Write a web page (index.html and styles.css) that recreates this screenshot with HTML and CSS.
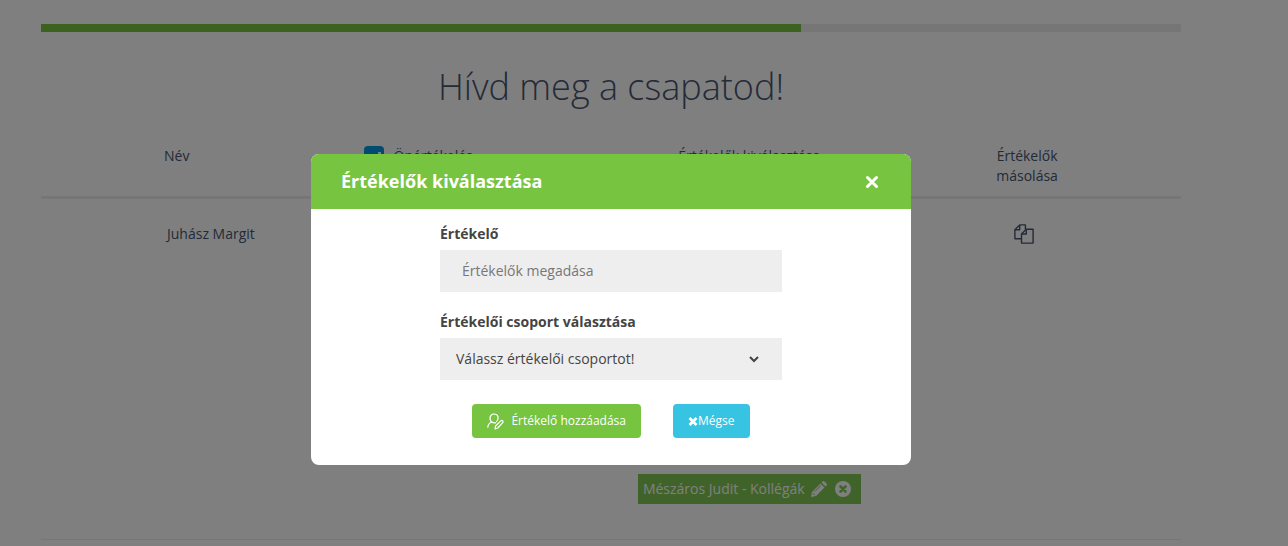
FILE: index.html
```html
<!DOCTYPE html>
<html lang="hu">
<head>
    <meta charset="UTF-8">
    <meta name="viewport" content="width=device-width, initial-scale=1.0">
    <title>Hívd meg a csapatod!</title>
    <link rel="stylesheet" href="styles.css">
</head>
<body>
    <main class="container">
        <div class="progress">
            <div class="progress-bar" style="width: 66.66%"></div>
        </div>

        <h1>Hívd meg a csapatod!</h1>

        <table class="team">
            <thead>
                <tr>
                    <th class="col-name">Név</th>
                    <th class="col-self">
                        <label class="check">
                            <input type="checkbox" checked>
                            Önértékelés
                        </label>
                    </th>
                    <th class="col-raters">Értékelők kiválasztása</th>
                    <th class="col-copy">Értékelők<br>másolása</th>
                </tr>
            </thead>
            <tbody>
                <tr>
                    <td class="col-name member">Juhász Margit</td>
                    <td class="col-self"></td>
                    <td class="col-raters">
                        <div class="tag">
                            <span>Mészáros Judit - Kollégák</span>
                            <button type="button" class="icon-btn" aria-label="Szerkesztés">
                                <svg width="16" height="16" viewBox="0 0 16 16" fill="currentColor">
                                    <path d="M0 16l1-5L9.500 2.500l4 4L5 15zM10.500 1.500L11.500.5q1-1 2 0l2 2q1 1 0 2l-1 1z"/>
                                    <path d="M1.800 12.200l2 2M3.800 10.500l6-6" stroke="#7fc750" stroke-width="1" fill="none"/>
                                </svg>
                            </button>
                            <button type="button" class="icon-btn" aria-label="Törlés">
                                <svg width="16" height="16" viewBox="0 0 16 16">
                                    <circle cx="8" cy="8" r="8" fill="currentColor"/>
                                    <path d="M5.500 5.500l5 5M10.500 5.500l-5 5" stroke="#7fc750" stroke-width="2.600" stroke-linecap="round"/>
                                </svg>
                            </button>
                        </div>
                    </td>
                    <td class="col-copy">
                        <button type="button" class="icon-btn" aria-label="Másolás">
                            <svg width="20" height="20" viewBox="0 0 20 20" fill="none" stroke="currentColor" stroke-width="1.400" stroke-linejoin="round">
                                <path d="M7.500 14.700H.9V5.700L5.700.9h5.700v4.500"/>
                                <path d="M5.700.9v4.800H.9"/>
                                <path d="M12.300 5.300h6.800v13.800H7.500V10z"/>
                                <path d="M12.300 5.300V10H7.500"/>
                            </svg>
                        </button>
                    </td>
                </tr>
            </tbody>
        </table>
    </main>

    <div class="overlay">
        <div class="modal" role="dialog" aria-labelledby="modal-title">
            <div class="modal-header">
                <h2 id="modal-title">Értékelők kiválasztása</h2>
                <button type="button" class="icon-btn" aria-label="Bezárás">
                    <svg width="14" height="14" viewBox="0 0 14 14" fill="none" stroke="currentColor" stroke-width="3" stroke-linecap="round">
                        <path d="M2.500 3.500l9 9M11.500 3.500l-9 9"/>
                    </svg>
                </button>
            </div>
            <form class="modal-body">
                <div class="field">
                    <label for="rater">Értékelő</label>
                    <input type="text" id="rater" placeholder="Értékelők megadása">
                </div>
                <div class="field">
                    <label for="group">Értékelői csoport választása</label>
                    <div class="select">
                        <select id="group">
                            <option>Válassz értékelői csoportot!</option>
                        </select>
                        <svg class="chevron" width="10" height="8" viewBox="0 0 10 8" fill="none" stroke="currentColor" stroke-width="2">
                            <path d="M1 2l4 4 4-4"/>
                        </svg>
                    </div>
                </div>
                <div class="actions">
                    <button type="button" class="btn btn-add">
                        <svg width="17" height="17" viewBox="0 0 17 17" fill="none" stroke="currentColor" stroke-width="1.200" stroke-linecap="round" stroke-linejoin="round">
                            <path d="M4.800 9C1.800 6.500 2.600 1 7 1s5.400 4.800 2.600 7.600"/>
                            <path d="M4.800 9C2.500 9.800 1 11.500.8 14.200M4.800 9c1.200.9 2.600 1.100 3.800.8"/>
                            <path d="M8 16l.6-3 5.200-5.200q1-.8 1.900 0 .8 1 0 1.900L10.700 15z"/>
                        </svg>
                        Értékelő hozzáadása
                    </button>
                    <button type="button" class="btn btn-cancel">
                        <svg width="10" height="9" viewBox="0 0 10 9" fill="none" stroke="currentColor" stroke-width="2.800">
                            <path d="M1.500 1l7 7M8.500 1l-7 7"/>
                        </svg>
                        Mégse
                    </button>
                </div>
            </form>
        </div>
    </div>
</body>
</html>
```

FILE: styles.css
```css
* {
    box-sizing: border-box;
}

body {
    margin: 0;
    padding-right: 66px;
    font-family: "Open Sans", sans-serif;
    font-size: 14px;
    line-height: 20px;
    color: #475670;
    background-color: #fff;
}

button, input, select {
    font: inherit;
    color: inherit;
}

.container {
    max-width: 1140px;
    margin: 0 auto;
    padding-top: 24px;
}

.progress {
    height: 8px;
    background-color: #ececec;
}

.progress-bar {
    height: 100%;
    background-color: #76c43f;
}

h1 {
    margin: 30px 0 34px;
    font-size: 36px;
    line-height: 50px;
    font-weight: 300;
    text-align: center;
}

.team {
    width: 100%;
    table-layout: fixed;
    border-collapse: collapse;
}

.team th {
    height: 51px;
    padding: 0 0 9px;
    font-weight: 400;
    vertical-align: top;
    border-bottom: 3px solid #ececec;
}

.team td {
    height: 342px;
    padding: 25px 0 35px;
    vertical-align: top;
    border-bottom: 1px solid #ececec;
}

.team .col-name {
    width: 24%;
    padding-left: 123px;
    text-align: left;
}

.team .member {
    padding-left: 126px;
}

.team .col-self {
    width: 27%;
    padding-left: 49px;
    text-align: left;
}

.team .col-raters {
    width: 22%;
    padding-left: 3px;
    text-align: center;
}

.team td.col-raters {
    vertical-align: bottom;
}

.team .col-copy {
    width: 27%;
    text-align: center;
}

.team td.col-copy {
    padding-right: 6px;
}

.check {
    display: flex;
    align-items: center;
    gap: 10px;
}

.check input {
    appearance: none;
    width: 20px;
    height: 20px;
    margin: 0;
    border-radius: 4px;
    background: #0098e0 linear-gradient(#fff, #fff) 14px 6px / 3px 3px no-repeat;
}

.icon-btn {
    display: inline-flex;
    padding: 0;
    border: 0;
    background: none;
    cursor: pointer;
}

.tag {
    display: inline-flex;
    align-items: center;
    gap: 8px;
    height: 30px;
    padding: 0 10px 0 5px;
    color: #fff;
    background-color: #7fc750;
    white-space: nowrap;
}

.tag span {
    margin-right: -2px;
}

.overlay {
    position: fixed;
    inset: 0;
    display: flex;
    justify-content: center;
    align-items: flex-start;
    padding: 154px 66px 0 0;
    background-color: rgba(0, 0, 0, .5);
}

.modal {
    width: 600px;
    border-radius: 8px;
    overflow: hidden;
    color: #444;
    background-color: #fff;
}

.modal-header {
    display: flex;
    justify-content: space-between;
    align-items: center;
    height: 55px;
    padding: 0 32px 2px 30px;
    color: #fff;
    background-color: #76c43f;
}

.modal-header h2 {
    margin: 0;
    font-size: 18px;
    line-height: 24px;
    font-weight: 700;
}

.modal-body {
    width: 342px;
    margin: 0 auto;
    padding: 15px 0 27px;
}

.field {
    margin-bottom: 20px;
}

.field label {
    display: block;
    margin-bottom: 6px;
    font-weight: 700;
}

.field input,
.field select {
    display: block;
    width: 100%;
    height: 42px;
    border: 0;
    border-radius: 0;
    background-color: #eee;
}

.field input {
    padding: 0 22px 2px;
}

.field input::placeholder {
    color: #777;
}

.field select {
    appearance: none;
    padding: 0 16px;
}

.select {
    position: relative;
}

.chevron {
    position: absolute;
    top: 17px;
    right: 23px;
    pointer-events: none;
}

.actions {
    display: flex;
    justify-content: center;
    gap: 32px;
    padding-top: 4px;
}

.btn {
    display: flex;
    align-items: center;
    height: 34px;
    padding: 0 15px;
    border: 0;
    border-radius: 4px;
    font-size: 12px;
    color: #fff;
    white-space: nowrap;
    cursor: pointer;
}

.btn-add {
    gap: 7px;
    background-color: #76c43f;
}

.btn-cancel {
    background-color: #36c4e2;
}
```
